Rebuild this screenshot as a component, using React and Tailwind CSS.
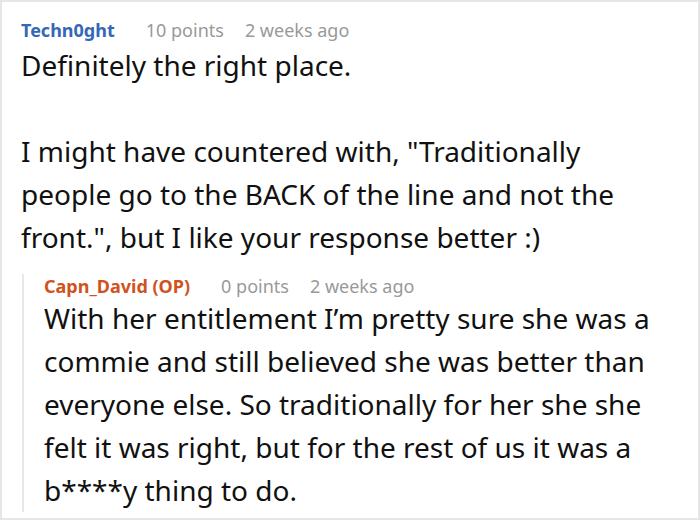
const FONT = "font-['Noto_Sans','Open_Sans',sans-serif]";

function Meta({ author, color, points, when }) {
  return (
    <div className="flex items-center text-[18px] leading-[24px]">
      <span className={`font-bold ${color}`}>{author}</span>
      <span className="ml-[31px] text-[#999999]">{points}</span>
      <span className="ml-[21px] text-[#999999]">{when}</span>
    </div>
  );
}

export default function App() {
  return (
    <div className={`w-[700px] h-[520px] overflow-hidden bg-white border-2 border-[#e6e6e6] ${FONT}`}>
      <div className="pl-[19px] pt-[16px]">
        <Meta author="Techn0ght" color="text-[#3467b8]" points="10 points" when="2 weeks ago" />
        <div className="mt-[2px] w-[640px] text-[28px] leading-[43px] text-[#111111]">
          <p>Definitely the right place.</p>
          <p className="mt-[43px]">
            I might have countered with, "Traditionally people go to the BACK of the line and not the front.", but I like your response better :)
          </p>
        </div>

        <div className="mt-[15px] ml-[1px] border-l-2 border-[#e8e8e8] pl-[20px]">
          <Meta author="Capn_David (OP)" color="text-[#d0531e]" points="0 points" when="2 weeks ago" />
          <p className="-mt-[1px] w-[620px] text-[28px] leading-[43px] text-[#111111]">
            With her entitlement I’m pretty sure she was a commie and still believed she was better than everyone else. So traditionally for her she she felt it was right, but for the rest of us it was a b****y thing to do.
          </p>
        </div>
      </div>
    </div>
  );
}
